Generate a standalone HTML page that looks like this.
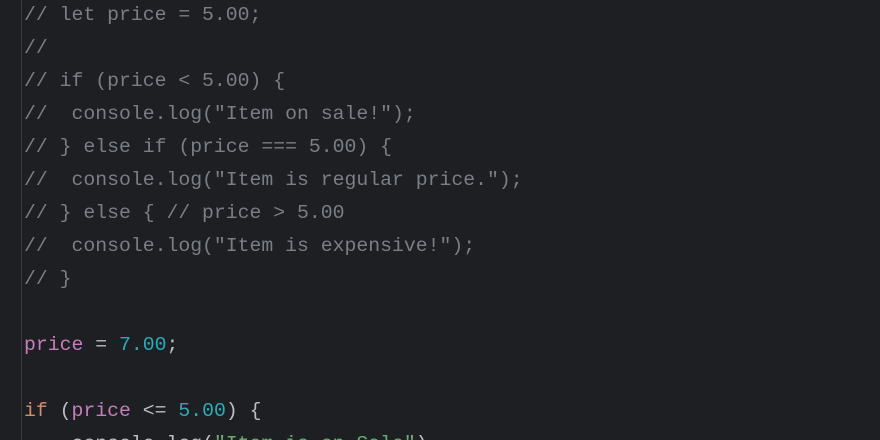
<!DOCTYPE html>
<html><head><style>
html,body{margin:0;padding:0;background:#1e1f22;width:880px;height:440px;overflow:hidden;position:relative}
.g{position:absolute;left:21px;top:0;width:1px;height:440px;background:#393b40}
pre{position:absolute;left:24px;top:-1px;margin:0;font-family:"Liberation Mono",monospace;font-size:19.8px;line-height:33px;color:#bcbec4;height:441px;overflow:hidden}
.c{color:#7a7e85}.p{color:#c77dbb}.n{color:#2aacb8}.k{color:#cf8e6d}.s{color:#6aab73}
</style></head><body>
<div class="g"></div>
<pre><span class="c">// let price = 5.00;
//
// if (price &lt; 5.00) {
//  console.log("Item on sale!");
// } else if (price === 5.00) {
//  console.log("Item is regular price.");
// } else { // price &gt; 5.00
//  console.log("Item is expensive!");
// }</span>

<span class="p">price</span> = <span class="n">7.00</span>;

<span class="k">if</span> (<span class="p">price</span> &lt;= <span class="n">5.00</span>) {
    console.log(<span class="s">"Item is on Sale"</span>)
</pre>
</body></html>
